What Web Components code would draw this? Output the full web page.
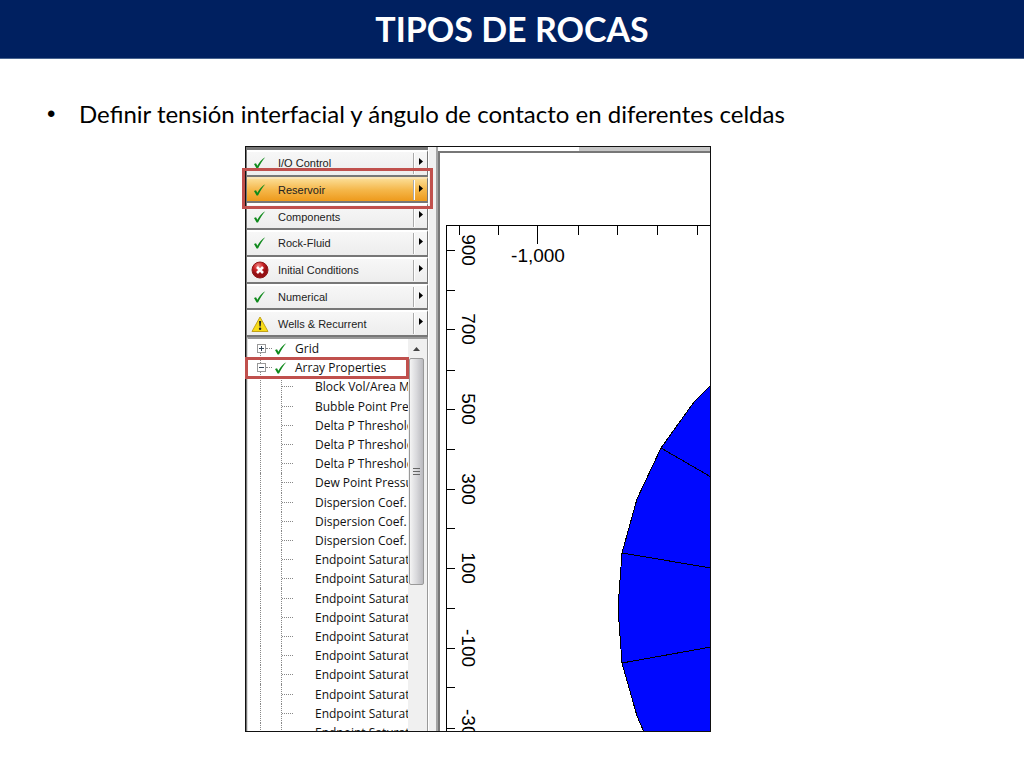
<!DOCTYPE html>
<html lang="es">
<head>
<meta charset="utf-8">
<title>Tipos de rocas</title>
<style>
body { margin: 0; background: #fff; color: #000; font-family: Lato, "Open Sans", sans-serif; }
</style>
</head>
<body>
<rock-slide>
  <span slot="title">TIPOS DE ROCAS</span>
  <span slot="point">Definir tensión interfacial y ángulo de contacto en diferentes celdas</span>
  <builder-window>
    <nav-button state="ok">I/O Control</nav-button>
    <nav-button state="ok" selected>Reservoir</nav-button>
    <nav-button state="ok">Components</nav-button>
    <nav-button state="ok">Rock-Fluid</nav-button>
    <nav-button state="error">Initial Conditions</nav-button>
    <nav-button state="ok">Numerical</nav-button>
    <nav-button state="warning">Wells &amp; Recurrent</nav-button>
    <property-tree slot="tree"></property-tree>
    <reservoir-plot slot="plot"></reservoir-plot>
  </builder-window>
</rock-slide>
<script>
const ICONS = {
  ok: '<svg width="18" height="18" viewBox="0 0 18 18" aria-hidden="true"><path d="M3 10 5 9.200 6.400 11.700 C8.500 8 11 5 14.200 3.200 C11.500 6.500 9 10.300 7 14.500 L5.600 14.500Z" fill="#0f8a1c"/></svg>',
  error: '<svg width="18" height="18" viewBox="0 0 18 18" aria-hidden="true"><defs><radialGradient id="r" cx=".4" cy=".25"><stop offset="0" stop-color="#ef8a86"/><stop offset=".6" stop-color="#cb2226"/><stop offset="1" stop-color="#961014"/></radialGradient></defs><circle cx="9" cy="9" r="8" fill="url(#r)" stroke="#8e1a1a"/><path d="M6 6 12 12M12 6 6 12" stroke="#fff" stroke-width="2.600"/></svg>',
  warning: '<svg width="18" height="18" viewBox="0 0 18 18" aria-hidden="true"><path d="M9 2 17 16.500H1Z" fill="#f8dc18" stroke="#c2a21a" stroke-linejoin="round"/><path d="M8 6h2.200l-.5 5.500H8.500Z" fill="#222"/><circle cx="9.100" cy="13.800" r="1.200" fill="#222"/></svg>'
};

class ShadowElement extends HTMLElement {
  constructor() {
    super();
    this.attachShadow({ mode: 'open' });
  }
  connectedCallback() {
    this.shadowRoot.innerHTML = this.render();
  }
}

customElements.define('rock-slide', class extends ShadowElement {
  render() {
    return `<style>
      :host { display: flex; flex-direction: column; min-height: 100vh; }
      header { background: #002060; border-bottom: 1px solid #48648f; text-align: center; }
      h1 { margin: 0; font-size: 34px; line-height: 58px; font-weight: 700; color: #fff; }
      ul { margin: 0; padding: 37px 32px 14px 47px; list-style: none; font-size: 24px; line-height: 36px; }
      li { display: flex; }
      li::before { content: "•"; width: 32px; flex: none; font-family: "Liberation Sans", Arial, sans-serif; }
      main { flex: 1; display: grid; grid-template-columns: 245fr 466fr 313fr; padding-bottom: 36px; }
      ::slotted(builder-window) { grid-column: 2; }
    </style>
    <header><h1><slot name="title"></slot></h1></header>
    <ul><li><slot name="point"></slot></li></ul>
    <main><slot></slot></main>`;
  }
});

customElements.define('builder-window', class extends ShadowElement {
  render() {
    return `<style>
      :host { display: flex; box-sizing: border-box; min-height: 480px; border: 1px solid #111; background: #f0f0f0;
        font-family: "Liberation Sans", Arial, sans-serif; }
      aside { flex: none; width: 182px; display: flex; flex-direction: column; border-left: 1px solid #777; border-top: 3px solid #777;
        box-sizing: border-box; }
      nav { flex: none; height: 187px; display: grid; grid-auto-rows: 1fr; }
      .split { flex: none; width: 10px; box-sizing: border-box; border-left: 1px solid #fff; border-right: 2px solid #a4a4a4; background: #f0f0f0; }
      section { flex: 1; min-width: 0; display: flex; flex-direction: column; }
      .tabs { flex: none; height: 6px; display: flex; justify-content: flex-end; border-bottom: 2px solid #777; box-sizing: border-box; background: #fff; }
      .tabs i { width: 48%; background: #c6c6c6; }
      .view { flex: 1; display: flex; border-left: 2px solid #777; background: #fff; min-height: 0; }
    </style>
    <aside><nav><slot></slot></nav><slot name="tree"></slot></aside>
    <div class="split"></div>
    <section><div class="tabs"><i></i></div><div class="view"><slot name="plot"></slot></div></section>`;
  }
});

customElements.define('nav-button', class extends ShadowElement {
  render() {
    return `<style>
      :host { display: block; position: relative; }
      button { width: 100%; height: 100%; box-sizing: border-box; display: flex; align-items: center; gap: 9px; margin: 0; padding: 0 0 0 4px;
        border: 0; border-top: 2px solid #fff; border-right: 1px solid #777; border-bottom: 2px solid #777;
        background: linear-gradient(#f7f7f7, #ededed); color: #222; font: 11px/16px "Liberation Sans", Arial, sans-serif; text-align: left; }
      :host([selected]) button { background: linear-gradient(#fbdc92, #f5b74a 50%, #ee9a1c); border-top-color: #f9e3b4; }
      svg { flex: none; }
      .label { flex: 1; white-space: nowrap; }
      .more { align-self: stretch; display: flex; justify-content: center; width: 13px; margin: 1px 0; border-left: 1px solid #aaa; box-shadow: inset 1px 0 #fff; }
      .more svg { margin-top: 4px; }
      :host([selected])::after { content: ""; position: absolute; inset: -9px -5px -6px -5px; border: 3px solid #c0504d; pointer-events: none; z-index: 2; }
    </style>
    <button type="button">${ICONS[this.getAttribute('state')]}<span class="label"><slot></slot></span>
      <span class="more"><svg width="5" height="9" viewBox="0 0 5 9" aria-hidden="true"><path d="M1 1 5 4.500 1 8Z" fill="#000"/></svg></span></button>`;
  }
});

customElements.define('property-tree', class extends ShadowElement {
  render() {
    const props = ['Block Vol/Area Modifiers', 'Bubble Point Pressure', ...Array(3).fill('Delta P Threshold'),
      'Dew Point Pressure', ...Array(3).fill('Dispersion Coef. Water'), ...Array(10).fill('Endpoint Saturation')];
    const branch = (name, sign, cls) => `<li class="branch ${cls}"><span class="box"><svg width="9" height="9" viewBox="0 0 9 9" aria-hidden="true"><rect x=".5" y=".5" width="8" height="8" fill="#fff" stroke="#999"/><path d="${sign}" stroke="#345"/></svg></span><span class="dash"></span>${ICONS.ok}<span class="label">${name}</span></li>`;
    return `<style>
      :host { flex: 1 1 0; min-height: 0; display: flex; box-sizing: border-box; border-top: 2px solid #999; border-right: 1px solid #999; border-left: 1px solid #ddd;
        background: #fff; overflow-x: visible; overflow-y: clip; font: 12px/19px "Open Sans", "Noto Sans", sans-serif; color: #111; }
      ul { flex: 1; min-width: 0; height: 403px; margin: 0; padding: 0; list-style: none; display: grid; grid-auto-rows: 1fr; position: relative; }
      li { display: flex; align-items: center; min-width: 0; white-space: nowrap; position: relative; }
      .label { min-width: 0; overflow: hidden; }
      .branch { padding-left: 9px; }
      .branch .label { padding-left: 5px; }
      .box { flex: none; display: flex; z-index: 1; }
      .dash { flex: none; width: 6px; border-top: 1px dotted #888; }
      .branch svg { flex: none; }
      .leaf::before { content: ""; flex: none; align-self: stretch; width: 12px; border-right: 1px dotted #888; }
      .leaf .tick { flex: none; align-self: stretch; width: 20px; border-right: 1px dotted #888; }
      .leaf .dash { width: 11px; margin-right: 22px; }
      .first::before { content: ""; position: absolute; left: 12px; top: 50%; bottom: 0; border-left: 1px dotted #888; }
      .open::before { content: ""; position: absolute; left: 12px; top: 0; bottom: 0; border-left: 1px dotted #888; }
      .open::after { content: ""; position: absolute; inset: -1px -1px -2px -3px; border: 3px solid #c0504d; z-index: 2; }
      .bar { flex: none; width: 19px; padding-right: 3px; box-sizing: border-box; background: #f0f0f0; display: flex; flex-direction: column; align-items: center; }
      .bar .up { flex: none; height: 19px; display: flex; align-items: center; }
      .thumb { flex: 0 1 227px; width: 15px; box-sizing: border-box; border: 1px solid #999; border-radius: 2px; background: linear-gradient(90deg, #f4f4f4, #d9d9dc 50%, #b9b9be);
        display: flex; align-items: center; justify-content: center; }
    </style>
    <ul>${branch('Grid', 'M2 4.500H7M4.500 2V7', 'first')}${branch('Array Properties', 'M2 4.500H7', 'open')}
    ${props.map(p => `<li class="leaf"><span class="tick"></span><span class="dash"></span><span class="label">${p}</span></li>`).join('')}</ul>
    <div class="bar"><span class="up"><svg width="7" height="4" viewBox="0 0 7 4" aria-hidden="true"><path d="M0 4 3.500 0 7 4Z" fill="#444"/></svg></span>
    <div class="thumb"><svg width="7" height="9" viewBox="0 0 7 9" aria-hidden="true"><path d="M0 1.500H7M0 4.500H7M0 7.500H7" stroke="#666"/></svg></div></div>`;
  }
});

customElements.define('reservoir-plot', class extends ShadowElement {
  render() {
    const xTicks = [20, 59, 98, 139, 178, 218, 258];
    const yTicks = [97, 137, 176, 217, 256, 296, 336, 375, 415, 455, 495, 534, 575];
    const yLabels = [['900', 97], ['700', 176], ['500', 256], ['300', 336], ['100', 415], ['-100', 495], ['-300', 575]];
    return `<style>
      :host { flex: 1; min-width: 0; position: relative; overflow: hidden; font-family: "Liberation Sans", Arial, sans-serif; }
      svg { position: absolute; inset: 0; width: 100%; height: 100%; }
      text { font-size: 19px; text-anchor: middle; fill: #000; }
      path { fill: none; stroke: #000; shape-rendering: crispEdges; }
      .cells { fill: #0008ff; }
    </style>
    <svg role="img" aria-label="Vista de celdas del yacimiento">
      <path class="cells" d="M400 180 L271 232 254 249 221 295 197 346 182 400 178 455 182 510 197 563 204 579 H400Z"/>
      <path d="M221 295 271 324 M182 400 271 415 M182 510 271 494"/>
      <path d="M2000 72.500H6.500V2000"/>
      <path d="${xTicks.map(x => `M${x - .5} 73v${x === 98 ? 18 : 9}`).join('')}${yTicks.map(y => `M7 ${y + .5}h8`).join('')}"/>
      <text x="98" y="109">-1,000</text>
      ${yLabels.map(([t, y]) => `<text transform="translate(22 ${y}) rotate(90)">${t}</text>`).join('')}
    </svg>`;
  }
});
</script>
</body>
</html>
